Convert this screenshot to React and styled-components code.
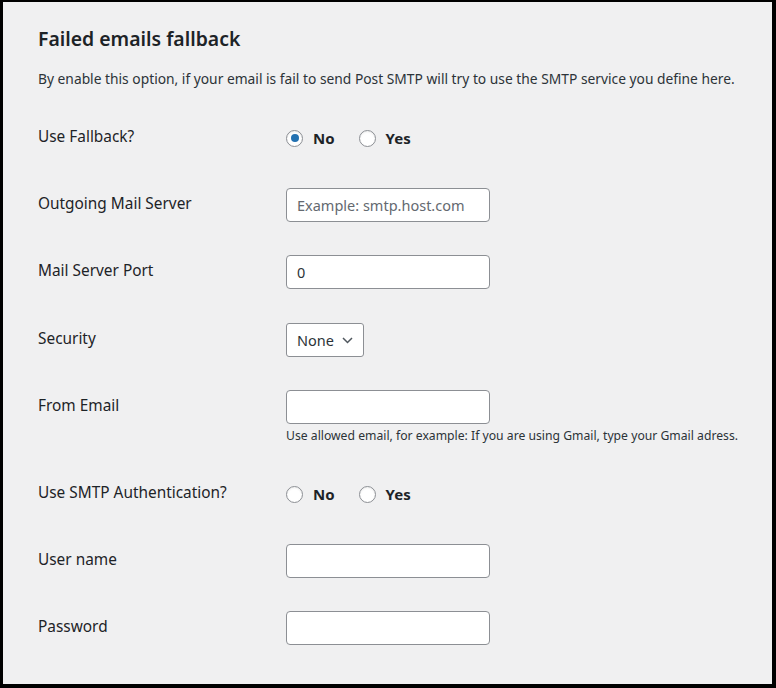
import React from "react";
import styled, { createGlobalStyle } from "styled-components";

const GlobalStyle = createGlobalStyle`
  html, body {
    margin: 0;
    padding: 0;
    background: #000;
  }
  * {
    box-sizing: border-box;
  }
`;

const Frame = styled.div`
  width: 776px;
  height: 688px;
  border-style: solid;
  border-color: #000;
  border-width: 2px 4px 4px 3px;
  background: #f0f0f1;
  padding: 22px 0 0 35px;
  font-family: "Noto Sans", "Open Sans", sans-serif;
  color: #1d2327;
  overflow: hidden;
`;

const Title = styled.h2`
  margin: 0;
  font-size: 19.4px;
  line-height: 30px;
  font-weight: 600;
  color: #1d2327;
`;

const Description = styled.p`
  margin: 15px 0 0;
  font-size: 13.8px;
  line-height: 20px;
  color: #2c3338;
`;

const Form = styled.div`
  display: flex;
  flex-direction: column;
  gap: 33px;
  margin-top: 32px;
`;

const Row = styled.div`
  display: grid;
  grid-template-columns: 248px 1fr;
  align-items: start;
  margin-top: ${({ $nudge }) => $nudge || 0}px;
`;

const Label = styled.div`
  font-size: 15.4px;
  line-height: 32px;
  font-weight: 400;
  color: #1d2327;
`;

const Field = styled.div`
  display: flex;
  flex-direction: column;
  align-items: flex-start;
`;

const Input = styled.input`
  width: 204px;
  height: 34px;
  border: 1px solid #8c8f94;
  border-radius: 4px;
  background: #fff;
  padding: 0 10px;
  font-family: inherit;
  font-size: 14.5px;
  color: #2c3338;
  outline: none;

  &::placeholder {
    color: #646970;
  }
`;

const SelectBox = styled.div`
  display: inline-flex;
  align-items: center;
  gap: 8px;
  height: 34px;
  padding: 0 10px;
  border: 1px solid #8c8f94;
  border-radius: 3px;
  background: #fff;
  font-size: 14.5px;
  color: #2c3338;
`;

const Help = styled.div`
  margin-top: 4px;
  font-size: 12.2px;
  line-height: 16px;
  color: #2c3338;
`;

const RadioGroup = styled.div`
  display: flex;
  align-items: center;
  gap: 24px;
  height: 34px;
`;

const RadioOption = styled.label`
  display: inline-flex;
  align-items: center;
  gap: 10px;
  font-size: 15px;
  font-weight: 700;
  color: #1d2327;
`;

const RadioDot = styled.span`
  position: relative;
  width: 17px;
  height: 17px;
  border-radius: 50%;
  border: 1px solid #8c8f94;
  background: #fff;
  box-shadow: inset 0 1px 2px rgba(0, 0, 0, 0.08);

  &::after {
    content: "";
    display: ${({ $checked }) => ($checked ? "block" : "none")};
    position: absolute;
    top: 3.5px;
    left: 3.5px;
    width: 8px;
    height: 8px;
    border-radius: 50%;
    background: #2271b1;
  }
`;

const Radios = ({ value }) => (
  <RadioGroup>
    <RadioOption>
      <RadioDot $checked={value === "no"} />
      No
    </RadioOption>
    <RadioOption>
      <RadioDot $checked={value === "yes"} />
      Yes
    </RadioOption>
  </RadioGroup>
);

const Chevron = () => (
  <svg width="11" height="7" viewBox="0 0 11 7" fill="none">
    <path d="M1 1l4.5 4.5L10 1" stroke="#50575e" strokeWidth="1.5" />
  </svg>
);

export default function App() {
  return (
    <>
      <GlobalStyle />
      <Frame>
        <Title>Failed emails fallback</Title>
        <Description>
          By enable this option, if your email is fail to send Post SMTP will
          try to use the SMTP service you define here.
        </Description>

        <Form>
          <Row>
            <Label>Use Fallback?</Label>
            <Field>
              <Radios value="no" />
            </Field>
          </Row>
          <Row>
            <Label>Outgoing Mail Server</Label>
            <Field>
              <Input placeholder="Example: smtp.host.com" />
            </Field>
          </Row>
          <Row>
            <Label>Mail Server Port</Label>
            <Field>
              <Input defaultValue="0" />
            </Field>
          </Row>
          <Row $nudge={1}>
            <Label>Security</Label>
            <Field>
              <SelectBox>
                None
                <Chevron />
              </SelectBox>
            </Field>
          </Row>
          <Row>
            <Label>From Email</Label>
            <Field>
              <Input />
              <Help>
                Use allowed email, for example: If you are using Gmail, type
                your Gmail adress.
              </Help>
            </Field>
          </Row>
          <Row>
            <Label>Use SMTP Authentication?</Label>
            <Field>
              <Radios value="" />
            </Field>
          </Row>
          <Row>
            <Label>User name</Label>
            <Field>
              <Input />
            </Field>
          </Row>
          <Row>
            <Label>Password</Label>
            <Field>
              <Input type="password" />
            </Field>
          </Row>
        </Form>
      </Frame>
    </>
  );
}
